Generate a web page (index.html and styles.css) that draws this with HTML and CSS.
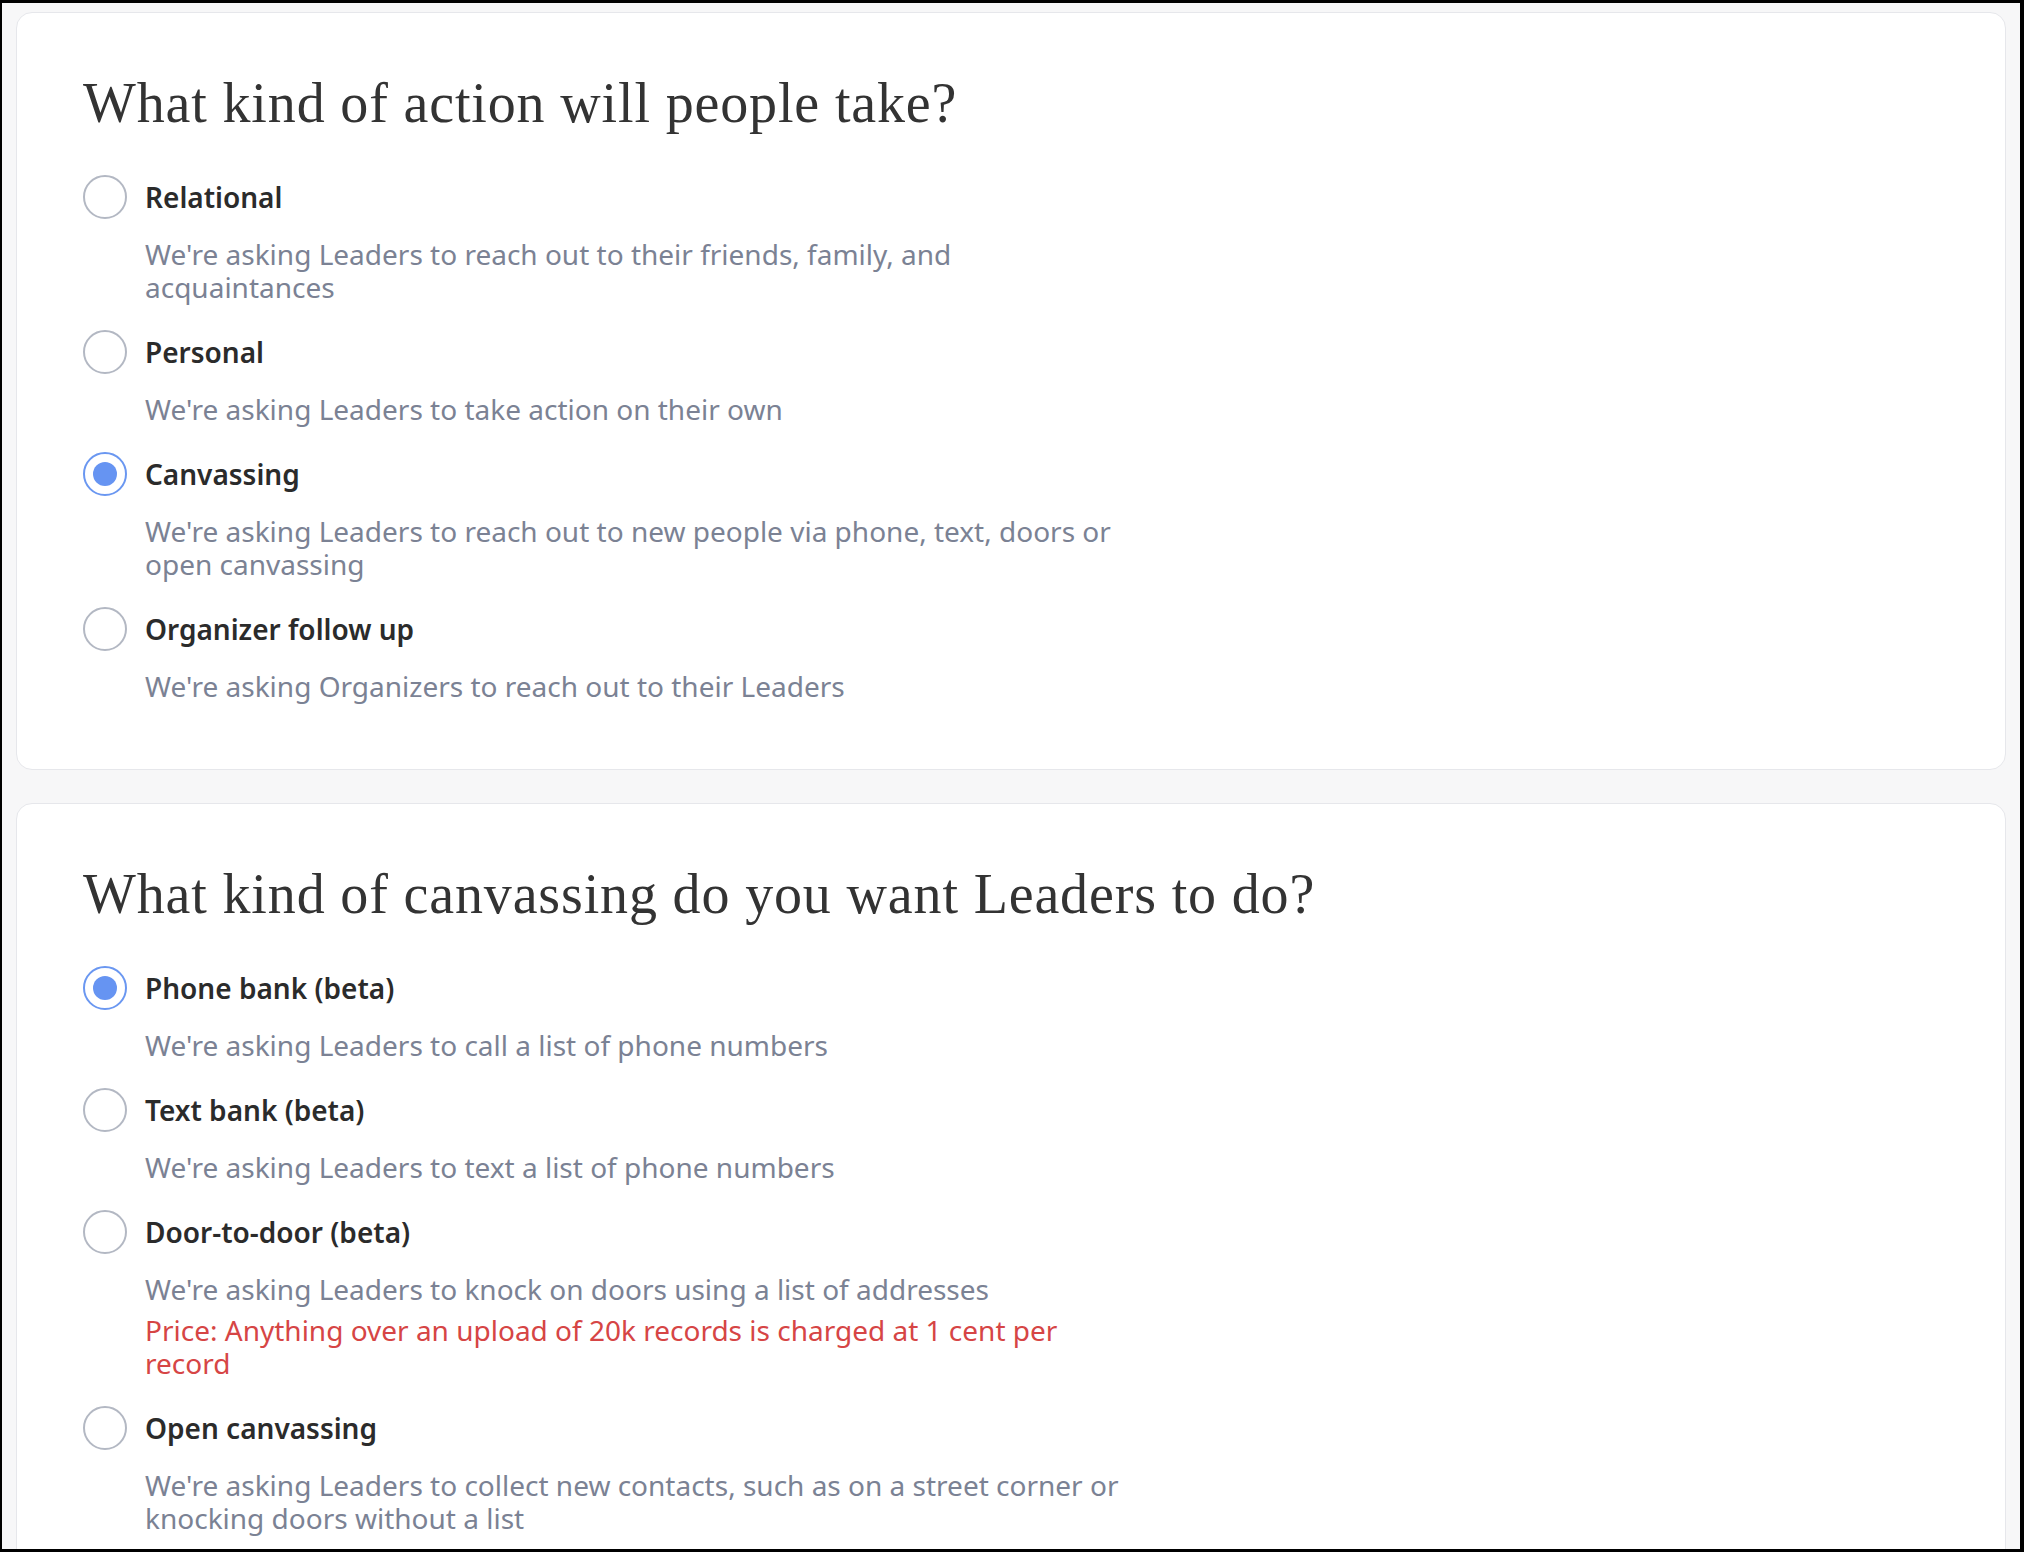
FILE: index.html
```html
<!DOCTYPE html>
<html lang="en">
<head>
<meta charset="utf-8">
<title>Action type</title>
<link rel="stylesheet" href="styles.css">
</head>
<body>
<div class="frame">
  <section class="card">
    <h2 class="title">What kind of action will people take?</h2>
    <div class="options">
      <div class="option">
        <span class="radio"></span>
        <div class="text">
          <div class="label">Relational</div>
          <p class="desc">We're asking Leaders to reach out to their friends, family, and acquaintances</p>
        </div>
      </div>
      <div class="option">
        <span class="radio"></span>
        <div class="text">
          <div class="label">Personal</div>
          <p class="desc">We're asking Leaders to take action on their own</p>
        </div>
      </div>
      <div class="option">
        <span class="radio checked"></span>
        <div class="text">
          <div class="label">Canvassing</div>
          <p class="desc">We're asking Leaders to reach out to new people via phone, text, doors or open canvassing</p>
        </div>
      </div>
      <div class="option">
        <span class="radio"></span>
        <div class="text">
          <div class="label">Organizer follow up</div>
          <p class="desc">We're asking Organizers to reach out to their Leaders</p>
        </div>
      </div>
    </div>
  </section>

  <section class="card">
    <h2 class="title">What kind of canvassing do you want Leaders to do?</h2>
    <div class="options">
      <div class="option">
        <span class="radio checked"></span>
        <div class="text">
          <div class="label">Phone bank (beta)</div>
          <p class="desc">We're asking Leaders to call a list of phone numbers</p>
        </div>
      </div>
      <div class="option">
        <span class="radio"></span>
        <div class="text">
          <div class="label">Text bank (beta)</div>
          <p class="desc">We're asking Leaders to text a list of phone numbers</p>
        </div>
      </div>
      <div class="option">
        <span class="radio"></span>
        <div class="text">
          <div class="label">Door-to-door (beta)</div>
          <p class="desc">We're asking Leaders to knock on doors using a list of addresses</p>
          <p class="price">Price: Anything over an upload of 20k records is charged at 1 cent per record</p>
        </div>
      </div>
      <div class="option">
        <span class="radio"></span>
        <div class="text">
          <div class="label">Open canvassing</div>
          <p class="desc">We're asking Leaders to collect new contacts, such as on a street corner or knocking doors without a list</p>
        </div>
      </div>
    </div>
  </section>
</div>
</body>
</html>
```

FILE: styles.css
```css
html, body {
  margin: 0;
  padding: 0;
  height: 1552px;
  overflow: hidden;
}

body {
  background: #000;
  font-family: "Noto Sans", "Open Sans", sans-serif;
}

.frame {
  box-sizing: border-box;
  height: 1552px;
  border-style: solid;
  border-color: #000;
  border-width: 3px 4px 3px 2px;
  background: #f7f7f8;
  padding: 9px 14px 0 14px;
  display: flex;
  flex-direction: column;
  gap: 33px;
  overflow: hidden;
}

.card {
  background: #fff;
  border: 1px solid #e6e7eb;
  border-radius: 16px;
  padding: 57px 66px 66px 66px;
  flex-shrink: 0;
}

.title {
  margin: 0 0 38px 0;
  font-family: "Liberation Serif", "DejaVu Serif", serif;
  font-weight: 400;
  font-size: 56px;
  line-height: 67px;
  letter-spacing: 0.85px;
  color: #333333;
}

.options {
  display: flex;
  flex-direction: column;
  gap: 26px;
}

.option {
  display: flex;
  gap: 18px;
  align-items: flex-start;
}

.radio {
  box-sizing: border-box;
  width: 44px;
  height: 44px;
  flex: 0 0 44px;
  border-radius: 50%;
  border: 2px solid #b3b8c3;
  background: #fff;
  display: flex;
  align-items: center;
  justify-content: center;
}

.radio.checked {
  border-color: #6a97f1;
}

.radio.checked::after {
  content: "";
  width: 24px;
  height: 24px;
  border-radius: 50%;
  background: #6694f2;
}

.text {
  max-width: 985px;
}

.label {
  font-size: 28px;
  font-weight: 600;
  line-height: 44px;
  color: #2b2b2b;
}

.desc {
  margin: 19px 0 0 0;
  font-size: 28px;
  line-height: 33px;
  color: #7b8294;
}

.price {
  margin: 8px 0 0 0;
  font-size: 28px;
  line-height: 33px;
  color: #d64545;
}
```
